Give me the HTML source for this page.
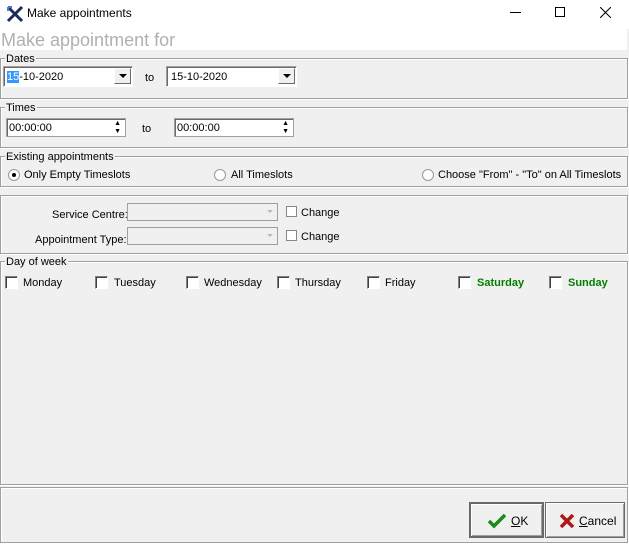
<!DOCTYPE html>
<html><head><style>
*{box-sizing:border-box;margin:0;padding:0}
body{width:629px;height:544px;background:#f0f0f0;font-family:"Liberation Sans",sans-serif;font-size:11px;color:#000;position:relative;overflow:hidden}
.a{position:absolute}
.g{position:absolute;border:1px solid #a0a0a0;box-shadow:inset 1px 1px 0 #fff,1px 1px 0 #fff}
.lg{position:absolute;background:#f0f0f0;padding:0 1px;line-height:12px}
.in{position:absolute;background:#fff;border:1px solid;border-color:#a0a0a0 #fff #fff #a0a0a0;box-shadow:inset 1px 1px 0 #696969}
.dd{position:absolute;width:17px;height:16px;background:#f0f0f0;border:1px solid;border-color:#fff #696969 #696969 #fff;top:1px;right:1px}
.dd:after{content:"";position:absolute;left:4px;top:5px;border:4px solid transparent;border-top:4px solid #000;border-bottom:0}
.cb{position:absolute;width:13px;height:13px;background:#fff;border:1px solid;border-color:#808080 #fff #fff #808080;box-shadow:inset 1px 1px 0 #404040}
.fc{position:absolute;width:11px;height:11px;border:1px solid #888;background:#fff}
.rb{position:absolute;width:12px;height:12px;border-radius:50%;background:#fff;border:1px solid #999}
.btn{position:absolute;background:#f0f0f0;border:1px solid #696969;box-shadow:inset 1px 1px 0 #fff,inset -1px -1px 0 #a0a0a0;font-size:12px;text-align:center}
</style></head><body>
<div class="a" style="left:0;top:0;width:629px;height:29px;background:#fff"></div>
<svg class="a" style="left:6px;top:5px" width="18" height="18" viewBox="0 0 18 18"><path d="M2 2 L16 16 M16 2 L2 16" stroke="#1b2a5a" stroke-width="3"/><path d="M2 2 L6 2 M2 2 L2 6" stroke="#4a7ad8" stroke-width="2"/></svg>
<div class="a" style="left:27px;top:6px;font-size:12px">Make appointments</div>
<div class="a" style="left:510px;top:12px;width:11px;height:1px;background:#000"></div>
<div class="a" style="left:555px;top:7px;width:10px;height:10px;border:1px solid #000"></div>
<svg class="a" style="left:600px;top:7px" width="11" height="11"><path d="M0 0L11 11M11 0L0 11" stroke="#000" stroke-width="1"/></svg>
<div class="a" style="left:0;top:29px;width:627px;height:21px;background:#fff"></div>
<div class="a" style="left:1px;top:30px;font-size:18px;color:#b0b0b0">Make appointment for</div>

<div class="g" style="left:0;top:58px;width:628px;height:41px"></div>
<div class="lg" style="left:5px;top:53px">Dates</div>
<div class="in" style="left:3px;top:66px;width:130px;height:21px"><span class="a" style="left:3px;top:4px"><span style="background:#3399ff;color:#fff">15</span>-10-2020</span><div class="dd"></div></div>
<div class="a" style="left:145px;top:72px">to</div>
<div class="in" style="left:166px;top:66px;width:131px;height:21px"><span class="a" style="left:4px;top:4px">15-10-2020</span><div class="dd"></div></div>

<div class="g" style="left:0;top:107px;width:628px;height:41px"></div>
<div class="lg" style="left:5px;top:102px">Times</div>
<div class="in" style="left:6px;top:118px;width:120px;height:19px;border-color:#a0a0a0"><span class="a" style="left:2px;top:3px">00:00:00</span><span class="a" style="right:4px;top:1px;font-size:7px;line-height:8px">▲<br>▼</span></div>
<div class="a" style="left:142px;top:123px">to</div>
<div class="in" style="left:174px;top:118px;width:120px;height:19px;border-color:#a0a0a0"><span class="a" style="left:2px;top:3px">00:00:00</span><span class="a" style="right:4px;top:1px;font-size:7px;line-height:8px">▲<br>▼</span></div>

<div class="g" style="left:0;top:156px;width:628px;height:31px"></div>
<div class="lg" style="left:5px;top:151px">Existing appointments</div>
<div class="rb" style="left:8px;top:169px"><div class="a" style="left:3px;top:3px;width:4px;height:4px;background:#000;border-radius:50%"></div></div>
<div class="a" style="left:24px;top:169px">Only Empty Timeslots</div>
<div class="rb" style="left:214px;top:169px"></div>
<div class="a" style="left:231px;top:169px">All Timeslots</div>
<div class="rb" style="left:422px;top:169px"></div>
<div class="a" style="left:438px;top:169px">Choose "From" - "To" on All Timeslots</div>

<div class="g" style="left:0;top:195px;width:628px;height:59px"></div>
<div class="a" style="left:52px;top:209px">Service Centre:</div>
<div class="a" style="left:127px;top:203px;width:151px;height:18px;border:1px solid #a0a0a0"><span class="a" style="right:4px;top:6px;border:3px solid transparent;border-top:3px solid #bbb"></span></div>
<div class="fc" style="left:286px;top:206px"></div><div class="a" style="left:301px;top:207px">Change</div>
<div class="a" style="left:35px;top:234px">Appointment Type:</div>
<div class="a" style="left:127px;top:227px;width:151px;height:18px;border:1px solid #a0a0a0"><span class="a" style="right:4px;top:6px;border:3px solid transparent;border-top:3px solid #bbb"></span></div>
<div class="fc" style="left:286px;top:230px"></div><div class="a" style="left:301px;top:231px">Change</div>

<div class="g" style="left:0;top:261px;width:628px;height:224px"></div>
<div class="lg" style="left:5px;top:256px">Day of week</div>
<div class="cb" style="left:5px;top:276px"></div><div class="a" style="left:23px;top:277px">Monday</div>
<div class="cb" style="left:95px;top:276px"></div><div class="a" style="left:114px;top:277px">Tuesday</div>
<div class="cb" style="left:186px;top:276px"></div><div class="a" style="left:204px;top:277px">Wednesday</div>
<div class="cb" style="left:277px;top:276px"></div><div class="a" style="left:295px;top:277px">Thursday</div>
<div class="cb" style="left:367px;top:276px"></div><div class="a" style="left:385px;top:277px">Friday</div>
<div class="cb" style="left:458px;top:276px"></div><div class="a" style="left:477px;top:277px;color:#008000;font-weight:bold">Saturday</div>
<div class="cb" style="left:549px;top:276px"></div><div class="a" style="left:568px;top:277px;color:#008000;font-weight:bold">Sunday</div>

<div class="g" style="left:0;top:487px;width:628px;height:56px"></div>
<div class="btn" style="left:469px;top:502px;width:75px;height:36px;border:2px solid #696969">
<svg class="a" style="left:16px;top:9px" width="20" height="16"><path d="M2 8 L7 13 L18 2" stroke="#1a8a1a" stroke-width="3.5" fill="none"/></svg>
<span class="a" style="left:40px;top:10px"><u>O</u>K</span></div>
<div class="btn" style="left:545px;top:502px;width:80px;height:36px">
<svg class="a" style="left:13px;top:10px" width="16" height="16"><path d="M2 2 L14 14 M14 2 L2 14" stroke="#b01818" stroke-width="3.5"/></svg>
<span class="a" style="left:33px;top:11px"><u>C</u>ancel</span></div>
</body></html>
